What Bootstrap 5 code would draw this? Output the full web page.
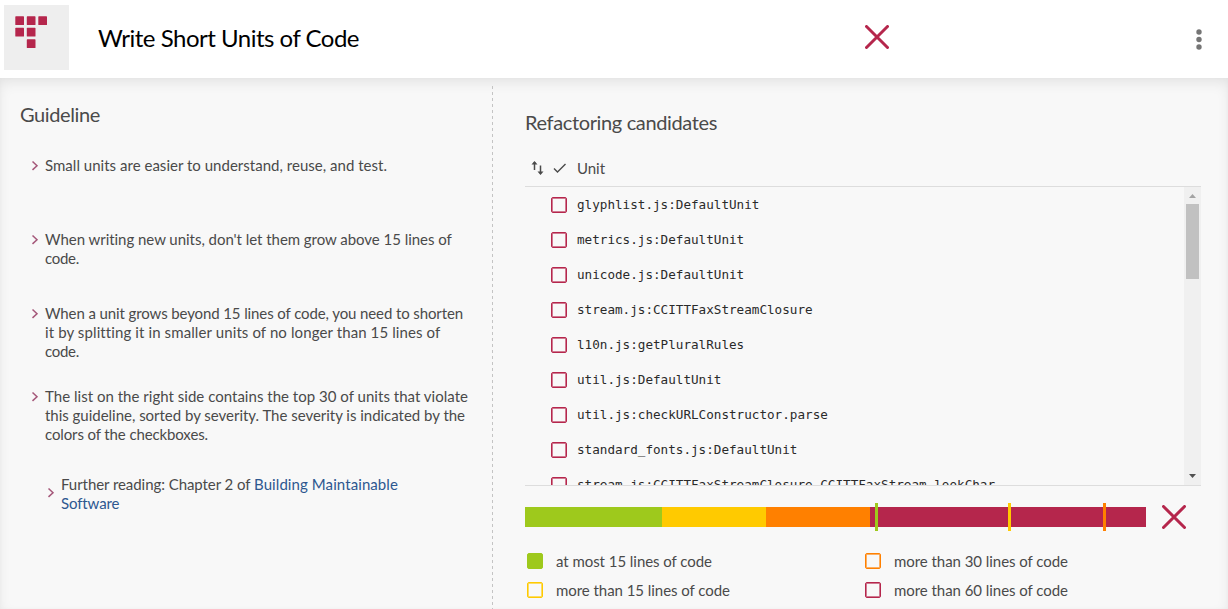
<!DOCTYPE html>
<html lang="en">
<head>
<meta charset="utf-8">
<meta name="viewport" content="width=device-width, initial-scale=1">
<title>Write Short Units of Code</title>
<link href="https://cdn.jsdelivr.net/npm/bootstrap@5.3.0/dist/css/bootstrap.min.css" rel="stylesheet">
<style>
:root{--crimson:#b5264c;--lime:#9ec91c;--amber:#ffca00;--tangerine:#ff8000}
body{font-family:Lato,"Noto Sans",sans-serif;font-size:15px;line-height:19px;color:#4a4a4a;background:#f8f8f8;height:609px}
.topbar{height:78px;padding:4px 24px 0 4px}
.logo-tile{width:65px;height:65px;background:#eee;margin-top:1px}
.title-row{height:65px}
.page-title{font-size:24px;line-height:30px;color:#000;width:767px;margin:3px 0 0 29px}
.topbar .cross{margin-top:1px}
.more-menu{margin:6px 0 0 auto}
.main-area{height:531px;box-shadow:inset 0 6px 14px -2px rgba(0,0,0,.09),inset 0 0 5px rgba(0,0,0,.02)}
.guide{width:492px;padding:24px 0 0 20px}
.divider{width:1px;margin-top:8px;background:repeating-linear-gradient(#c4c4c4 0 3px,transparent 3px 6px)}
.heading{font-size:20px;line-height:24px;font-weight:400;margin:0;color:#4a4a4a}
.points{margin:30px 0 0;padding:0 0 0 11px}
.points li{height:74px;gap:6px;white-space:nowrap}
.points li.tall{height:83px}
.points li.sub{height:40px;margin:5px 0 0 16px}
.chev{width:8px;height:19px;flex:none}
.sub .chev{margin-top:8px}
.book{color:#2d5790;text-decoration:none}
.cands{width:676px;margin-left:32px;padding-top:32px}
.list-head{height:40px;margin-top:13px;padding:3px 0 0 6px;border-bottom:1px solid #ddd}
.unit-label{margin:1px 0 0 10px}
.list-body{height:299px;border-bottom:1px solid #ddd}
.unit-row{height:35px;gap:10px;padding-left:26px;color:#2a2a2a;font:12.64px/19px "DejaVu Sans Mono",monospace;white-space:nowrap}
.unit-row span{margin-top:-1px}
.tick{width:16px;height:16px;flex:none;border:1px solid var(--c,var(--crimson));border-radius:2px;position:relative}
.tick::after{content:"";display:block;width:14px;height:14px;border:1px solid var(--c,var(--crimson));opacity:.6}
.tick.full{background:var(--c)}
.track{width:17px;background:#f0f0f0;height:298px}
.thumb{width:13px;height:75px;background:#c1c1c1}
.gauge{height:28px;margin-top:17px}
.meter{width:621px;height:20px;position:relative}
.pin{position:absolute;top:-4px;width:3px;height:28px;background:var(--c)}
.legend{margin:16px 0 0 2px;height:60px}
.legend>div{width:338px;height:29px;gap:13px}
.legend>div:nth-child(even){width:336px}
.legend .tick{margin-top:-1px}
.c-lime{--c:var(--lime)}.c-amber{--c:var(--amber)}.c-tang{--c:var(--tangerine)}.c-crim{--c:var(--crimson)}
.seg{background:var(--c)}
</style>
<script src="https://cdn.jsdelivr.net/npm/bootstrap@5.3.0/dist/js/bootstrap.bundle.min.js"></script>
</head>
<body class="overflow-hidden">
<header class="topbar bg-white d-flex align-items-start">
  <svg class="logo-tile" viewBox="0 0 65 65" fill="#b5264c"><rect x="11.300" y="11.300" width="8.700" height="8.700" rx=".6"/><rect x="22.800" y="11.300" width="8.700" height="8.700" rx=".6"/><rect x="34.300" y="11.300" width="8.700" height="8.700" rx=".6"/><rect x="11.300" y="22.800" width="8.700" height="8.700" rx=".6"/><rect x="22.800" y="22.800" width="8.700" height="8.700" rx=".6"/><rect x="22.800" y="34.300" width="8.700" height="8.700" rx=".6"/></svg>
  <div class="title-row d-flex align-items-center flex-grow-1">
    <h1 class="page-title fw-normal"><span class="fit" data-w="261">Write Short Units of Code</span></h1>
    <svg class="cross" width="24" height="24" viewBox="0 0 24 24" stroke="#b5264c" stroke-width="3" stroke-linecap="round"><path d="M1.500 1.500l21 21M22.500 1.500l-21 21"/></svg>
    <svg class="more-menu" width="10" height="22" viewBox="0 0 10 22" fill="#757575"><circle cx="5" cy="3" r="2.700"/><circle cx="5" cy="10.500" r="2.700"/><circle cx="5" cy="18" r="2.700"/></svg>
  </div>
</header>
<main class="main-area d-flex">
  <section class="guide">
    <h2 class="heading"><span class="fit" data-w="80">Guideline</span></h2>
    <ul class="points list-unstyled">
      <li class="d-flex"><svg class="chev" viewBox="0 0 8 19" fill="none" stroke="#a5587a" stroke-width="1.500"><path d="M1.500 5.500l4.500 4.200-4.500 4.200"/></svg><div><span class="fit" data-w="342">Small units are easier to understand, reuse, and test.</span></div></li>
      <li class="d-flex"><svg class="chev" viewBox="0 0 8 19" fill="none" stroke="#a5587a" stroke-width="1.500"><path d="M1.500 5.500l4.500 4.200-4.500 4.200"/></svg><div><span class="fit" data-w="407">When writing new units, don't let them grow above 15 lines of</span><br><span class="fit" data-w="34">code.</span></div></li>
      <li class="d-flex tall"><svg class="chev" viewBox="0 0 8 19" fill="none" stroke="#a5587a" stroke-width="1.500"><path d="M1.500 5.500l4.500 4.200-4.500 4.200"/></svg><div><span class="fit" data-w="418">When a unit grows beyond 15 lines of code, you need to shorten</span><br><span class="fit" data-w="395">it by splitting it in smaller units of no longer than 15 lines of</span><br><span class="fit" data-w="34">code.</span></div></li>
      <li class="d-flex tall"><svg class="chev" viewBox="0 0 8 19" fill="none" stroke="#a5587a" stroke-width="1.500"><path d="M1.500 5.500l4.500 4.200-4.500 4.200"/></svg><div><span class="fit" data-w="423">The list on the right side contains the top 30 of units that violate</span><br><span class="fit" data-w="420">this guideline, sorted by severity. The severity is indicated by the</span><br><span class="fit" data-w="163">colors of the checkboxes.</span></div></li>
      <li class="d-flex sub"><svg class="chev" viewBox="0 0 8 19" fill="none" stroke="#a5587a" stroke-width="1.500"><path d="M1.500 5.500l4.500 4.200-4.500 4.200"/></svg><div><span class="fit" data-w="193">Further reading: Chapter 2 of </span><a class="book fit" data-w="144" href="#">Building Maintainable</a><br><a class="book fit" data-w="58" href="#">Software</a></div></li>
    </ul>
  </section>
  <div class="divider"></div>
  <section class="cands">
    <h2 class="heading"><span class="fit" data-w="192">Refactoring candidates</span></h2>
    <div class="list-head d-flex align-items-center">
      <svg width="14" height="16" viewBox="0 0 14 16" fill="none" stroke="#4a4a4a" stroke-width="1.500"><path d="M3.500 10V2M9.500 5.500v8"/><path d="M.5 4.500L3.500 1l3 3.500zM6.500 11.500l3 3.500 3-3.500z" fill="#4a4a4a" stroke="none"/></svg>
      <svg class="ms-2" width="14" height="12" viewBox="0 0 14 12" fill="none" stroke="#4a4a4a" stroke-width="1.400"><path d="M1 6.500l3.500 3.500L12.500 2"/></svg>
      <span class="fit unit-label" data-w="28">Unit</span>
    </div>
    <div class="list-body d-flex overflow-hidden">
      <div class="flex-grow-1">
        <div class="unit-row d-flex align-items-center"><i class="tick"></i><span>glyphlist.js:DefaultUnit</span></div>
        <div class="unit-row d-flex align-items-center"><i class="tick"></i><span>metrics.js:DefaultUnit</span></div>
        <div class="unit-row d-flex align-items-center"><i class="tick"></i><span>unicode.js:DefaultUnit</span></div>
        <div class="unit-row d-flex align-items-center"><i class="tick"></i><span>stream.js:CCITTFaxStreamClosure</span></div>
        <div class="unit-row d-flex align-items-center"><i class="tick"></i><span>l10n.js:getPluralRules</span></div>
        <div class="unit-row d-flex align-items-center"><i class="tick"></i><span>util.js:DefaultUnit</span></div>
        <div class="unit-row d-flex align-items-center"><i class="tick"></i><span>util.js:checkURLConstructor.parse</span></div>
        <div class="unit-row d-flex align-items-center"><i class="tick"></i><span>standard_fonts.js:DefaultUnit</span></div>
        <div class="unit-row d-flex align-items-center"><i class="tick"></i><span>stream.js:CCITTFaxStreamClosure.CCITTFaxStream.lookChar</span></div>
      </div>
      <div class="track d-flex flex-column align-items-center">
        <svg width="17" height="17" viewBox="0 0 17 17" fill="#a3a3a3"><path d="M8.500 7L12 11H5z"/></svg>
        <div class="thumb"></div>
        <svg class="mt-auto" width="17" height="17" viewBox="0 0 17 17" fill="#505050"><path d="M5 6h7L8.500 10z"/></svg>
      </div>
    </div>
    <div class="gauge d-flex align-items-center">
      <div class="meter d-flex">
        <div class="seg c-lime" style="width:137px"></div><div class="seg c-amber" style="width:104px"></div><div class="seg c-tang" style="width:104px"></div><div class="seg c-crim flex-grow-1"></div>
        <i class="pin c-lime" style="left:350px"></i><i class="pin c-amber" style="left:483px"></i><i class="pin c-tang" style="left:578px"></i>
      </div>
      <svg class="ms-3" width="24" height="24" viewBox="0 0 24 24" stroke="#b5264c" stroke-width="3" stroke-linecap="round"><path d="M1.500 1.500l21 21M22.500 1.500l-21 21"/></svg>
    </div>
    <div class="legend d-flex flex-wrap align-content-start">
      <div class="d-flex align-items-center"><i class="tick full c-lime"></i><span class="fit" data-w="156">at most 15 lines of code</span></div>
      <div class="d-flex align-items-center"><i class="tick c-tang"></i><span class="fit" data-w="174">more than 30 lines of code</span></div>
      <div class="d-flex align-items-center"><i class="tick c-amber"></i><span class="fit" data-w="174">more than 15 lines of code</span></div>
      <div class="d-flex align-items-center"><i class="tick c-crim"></i><span class="fit" data-w="174">more than 60 lines of code</span></div>
    </div>
  </section>
</main>
<script>
/* Tunes the letter spacing so each line keeps its intended measure. */
document.querySelectorAll('.fit').forEach(function(e){
  var n=e.textContent.length,w=e.getBoundingClientRect().width;
  e.style.letterSpacing=((e.dataset.w-w)/n)+'px';
});
</script>
</body>
</html>
